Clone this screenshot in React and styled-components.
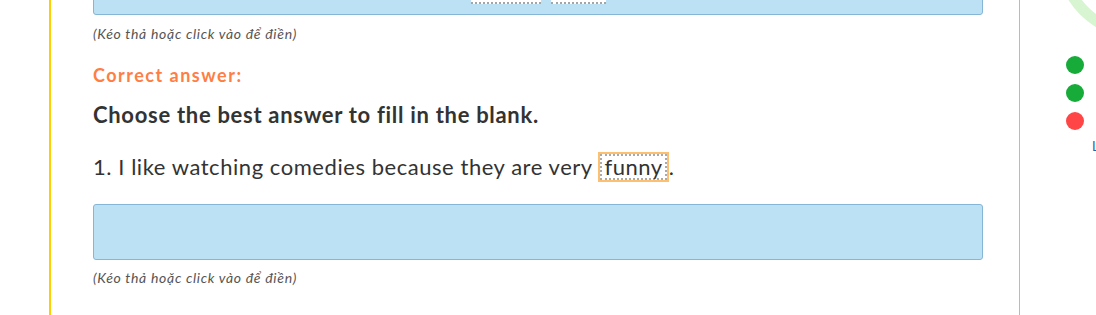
import React from 'react';
import styled, { createGlobalStyle } from 'styled-components';

const GlobalStyle = createGlobalStyle`
  html, body {
    margin: 0;
    padding: 0;
    background: #fff;
    overflow: hidden;
  }
  body {
    font-family: 'Lato', 'Noto Sans', sans-serif;
    color: #333;
  }
`;

const Page = styled.div`
  display: grid;
  grid-template-columns: 1020px 1fr;
  height: 315px;
  overflow: hidden;
`;

const MainColumn = styled.div`
  margin-left: 49px;
  border-left: 2px solid #ffd000;
  border-right: 1px solid #f3b82c;
  padding: 0 36px 0 42px;
`;

const DropZone = styled.div`
  box-sizing: border-box;
  height: 56px;
  margin-top: ${(p) => p.$offset || 0}px;
  background: #bce1f5;
  border: 1px solid #86b6d6;
  border-radius: 3px;
  display: flex;
  justify-content: center;
  align-items: flex-end;
  gap: 10px;
  padding-bottom: 10px;
`;

const Slot = styled.div`
  box-sizing: border-box;
  width: ${(p) => p.$w}px;
  height: 30px;
  background: #fff;
  border: 2px dotted #a5a5a5;
`;

const Hint = styled.div`
  font-style: italic;
  font-size: 14px;
  line-height: 18px;
  letter-spacing: 0.7px;
  color: #555;
  margin-top: ${(p) => p.$top}px;
`;

const CorrectLabel = styled.div`
  font-size: 18px;
  font-weight: 700;
  line-height: 22px;
  letter-spacing: 1.5px;
  color: #ff7e44;
  margin-top: 21px;
`;

const Question = styled.div`
  font-size: 22px;
  font-weight: 700;
  line-height: 28px;
  letter-spacing: 0.7px;
  color: #333;
  margin-top: 15px;
`;

const Sentence = styled.div`
  font-size: 22px;
  line-height: 30px;
  letter-spacing: 0.55px;
  color: #333;
  margin-top: 23px;
  margin-bottom: 22px;
`;

const Answer = styled.span`
  display: inline-block;
  border: 2px solid #fdc070;
  line-height: 22px;
`;

const AnswerInner = styled.span`
  display: inline-block;
  border: 2px dotted #aaa;
  padding: 0 2px;
`;

const Sidebar = styled.div`
  overflow: hidden;
  display: flex;
  flex-direction: column;
  padding-left: 46px;
`;

const Chart = styled.svg`
  display: block;
  margin-left: -46px;
  overflow: visible;
`;

const Dots = styled.div`
  display: flex;
  flex-direction: column;
  gap: 10px;
  margin-top: 16px;
`;

const Dot = styled.span`
  width: 18px;
  height: 18px;
  border-radius: 50%;
  background: ${(p) => (p.$ok ? '#17ab3a' : '#ff4545')};
`;

const Legend = styled.div`
  margin-top: 9px;
  margin-left: 26px;
  font-size: 13px;
  line-height: 14px;
  color: #2a62a8;
  white-space: nowrap;
`;

export default function App() {
  return (
    <>
      <GlobalStyle />
      <Page>
        <MainColumn>
          <DropZone $offset={-41}>
            <Slot $w={70} />
            <Slot $w={55} />
          </DropZone>
          <Hint $top={10}>(Kéo thả hoặc click vào để điền)</Hint>

          <CorrectLabel>Correct answer:</CorrectLabel>
          <Question>Choose the best answer to fill in the blank.</Question>
          <Sentence>
            1. I like watching comedies because they are very{' '}
            <Answer>
              <AnswerInner>funny</AnswerInner>
            </Answer>.
          </Sentence>

          <DropZone />
          <Hint $top={9}>(Kéo thả hoặc click vào để điền)</Hint>
        </MainColumn>

        <Sidebar>
          <Chart width="76" height="40" viewBox="0 0 76 40">
            <circle cx="120" cy="-45" r="79" fill="none" stroke="#d6f5d0" strokeWidth="11" />
          </Chart>
          <Dots>
            <Dot $ok />
            <Dot $ok />
            <Dot />
          </Dots>
          <Legend>Làm đúng</Legend>
        </Sidebar>
      </Page>
    </>
  );
}
